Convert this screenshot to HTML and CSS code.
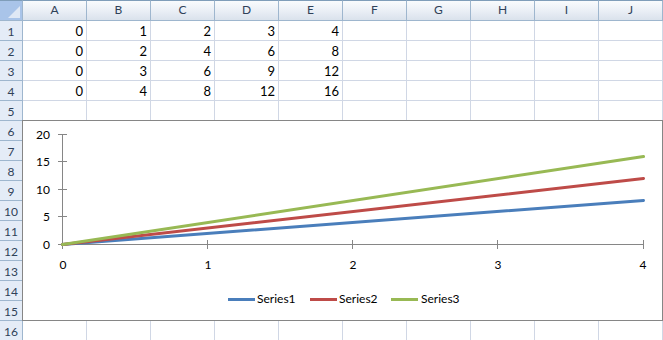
FILE: index.html
```html
<!DOCTYPE html>
<html lang="en">
<head>
  <meta charset="UTF-8" />
  <title>Book1 - Sheet1</title>
  <link rel="stylesheet" href="styles.css">
</head>
<body>
  <div class="sheet">
    <div class="corner"></div>
    <div class="colhead">A</div><div class="colhead">B</div><div class="colhead">C</div><div class="colhead">D</div><div class="colhead">E</div><div class="colhead">F</div><div class="colhead">G</div><div class="colhead">H</div><div class="colhead">I</div><div class="colhead">J</div>

    <div class="rowhead">1</div><div class="cell">0</div><div class="cell">1</div><div class="cell">2</div><div class="cell">3</div><div class="cell">4</div><div class="cell"></div><div class="cell"></div><div class="cell"></div><div class="cell"></div><div class="cell"></div>
    <div class="rowhead">2</div><div class="cell">0</div><div class="cell">2</div><div class="cell">4</div><div class="cell">6</div><div class="cell">8</div><div class="cell"></div><div class="cell"></div><div class="cell"></div><div class="cell"></div><div class="cell"></div>
    <div class="rowhead">3</div><div class="cell">0</div><div class="cell">3</div><div class="cell">6</div><div class="cell">9</div><div class="cell">12</div><div class="cell"></div><div class="cell"></div><div class="cell"></div><div class="cell"></div><div class="cell"></div>
    <div class="rowhead">4</div><div class="cell">0</div><div class="cell">4</div><div class="cell">8</div><div class="cell">12</div><div class="cell">16</div><div class="cell"></div><div class="cell"></div><div class="cell"></div><div class="cell"></div><div class="cell"></div>
    <div class="rowhead">5</div><div class="cell"></div><div class="cell"></div><div class="cell"></div><div class="cell"></div><div class="cell"></div><div class="cell"></div><div class="cell"></div><div class="cell"></div><div class="cell"></div><div class="cell"></div>
    <div class="rowhead">6</div><div class="cell"></div><div class="cell"></div><div class="cell"></div><div class="cell"></div><div class="cell"></div><div class="cell"></div><div class="cell"></div><div class="cell"></div><div class="cell"></div><div class="cell"></div>
    <div class="rowhead">7</div><div class="cell"></div><div class="cell"></div><div class="cell"></div><div class="cell"></div><div class="cell"></div><div class="cell"></div><div class="cell"></div><div class="cell"></div><div class="cell"></div><div class="cell"></div>
    <div class="rowhead">8</div><div class="cell"></div><div class="cell"></div><div class="cell"></div><div class="cell"></div><div class="cell"></div><div class="cell"></div><div class="cell"></div><div class="cell"></div><div class="cell"></div><div class="cell"></div>
    <div class="rowhead">9</div><div class="cell"></div><div class="cell"></div><div class="cell"></div><div class="cell"></div><div class="cell"></div><div class="cell"></div><div class="cell"></div><div class="cell"></div><div class="cell"></div><div class="cell"></div>
    <div class="rowhead">10</div><div class="cell"></div><div class="cell"></div><div class="cell"></div><div class="cell"></div><div class="cell"></div><div class="cell"></div><div class="cell"></div><div class="cell"></div><div class="cell"></div><div class="cell"></div>
    <div class="rowhead">11</div><div class="cell"></div><div class="cell"></div><div class="cell"></div><div class="cell"></div><div class="cell"></div><div class="cell"></div><div class="cell"></div><div class="cell"></div><div class="cell"></div><div class="cell"></div>
    <div class="rowhead">12</div><div class="cell"></div><div class="cell"></div><div class="cell"></div><div class="cell"></div><div class="cell"></div><div class="cell"></div><div class="cell"></div><div class="cell"></div><div class="cell"></div><div class="cell"></div>
    <div class="rowhead">13</div><div class="cell"></div><div class="cell"></div><div class="cell"></div><div class="cell"></div><div class="cell"></div><div class="cell"></div><div class="cell"></div><div class="cell"></div><div class="cell"></div><div class="cell"></div>
    <div class="rowhead">14</div><div class="cell"></div><div class="cell"></div><div class="cell"></div><div class="cell"></div><div class="cell"></div><div class="cell"></div><div class="cell"></div><div class="cell"></div><div class="cell"></div><div class="cell"></div>
    <div class="rowhead">15</div><div class="cell"></div><div class="cell"></div><div class="cell"></div><div class="cell"></div><div class="cell"></div><div class="cell"></div><div class="cell"></div><div class="cell"></div><div class="cell"></div><div class="cell"></div>
    <div class="rowhead">16</div><div class="cell"></div><div class="cell"></div><div class="cell"></div><div class="cell"></div><div class="cell"></div><div class="cell"></div><div class="cell"></div><div class="cell"></div><div class="cell"></div><div class="cell"></div>

    <!-- embedded chart floats over the cells -->
    <svg class="chart" width="641" height="201" viewBox="22 120 641 201">
      <rect x="22.5" y="120.5" width="640" height="200" fill="#fff" stroke="#868686"/>
      <g stroke="#868686" stroke-width="1">
        <line x1="62.5" y1="134" x2="62.5" y2="245"/>
        <line x1="62" y1="244.5" x2="644" y2="244.5"/>
        <line x1="58" y1="134.5" x2="67" y2="134.5"/>
        <line x1="58" y1="161.5" x2="67" y2="161.5"/>
        <line x1="58" y1="189.5" x2="67" y2="189.5"/>
        <line x1="58" y1="216.5" x2="67" y2="216.5"/>
        <line x1="58" y1="244.5" x2="67" y2="244.5"/>
        <line x1="62.5" y1="240" x2="62.5" y2="249"/>
        <line x1="207.5" y1="240" x2="207.5" y2="249"/>
        <line x1="352.5" y1="240" x2="352.5" y2="249"/>
        <line x1="497.5" y1="240" x2="497.5" y2="249"/>
        <line x1="643.5" y1="240" x2="643.5" y2="249"/>
      </g>
      <g class="axis-labels" text-anchor="end">
        <text x="50" y="139">20</text>
        <text x="50" y="166">15</text>
        <text x="50" y="194">10</text>
        <text x="50" y="221">5</text>
        <text x="50" y="249">0</text>
      </g>
      <g class="axis-labels" text-anchor="middle">
        <text x="63" y="269">0</text>
        <text x="208" y="269">1</text>
        <text x="353" y="269">2</text>
        <text x="498" y="269">3</text>
        <text x="643" y="269">4</text>
      </g>
      <g fill="none" stroke-width="3" stroke-linecap="round">
        <line x1="62.5" y1="244.5" x2="643.5" y2="200.5" stroke="#4a7ebb"/>
        <line x1="62.5" y1="244.5" x2="643.5" y2="178.5" stroke="#be4b48"/>
        <line x1="62.5" y1="244.5" x2="643.5" y2="156.5" stroke="#98b954"/>
      </g>
      <g class="legend" stroke-width="3">
        <line x1="228" y1="299.5" x2="255" y2="299.5" stroke="#4a7ebb"/>
        <text x="257" y="303">Series1</text>
        <line x1="310" y1="299.5" x2="337" y2="299.5" stroke="#be4b48"/>
        <text x="339" y="303">Series2</text>
        <line x1="391" y1="299.5" x2="418" y2="299.5" stroke="#98b954"/>
        <text x="421" y="303">Series3</text>
      </g>
    </svg>
  </div>
</body>
</html>
```
FILE: styles.css
```css
*{margin:0;padding:0;box-sizing:border-box}
html,body{width:663px;height:340px;overflow:hidden;background:#fff;font-family:Lato,'Liberation Sans',sans-serif}
.sheet{position:relative;display:grid;grid-template-columns:23px repeat(10,64px);grid-template-rows:21px;grid-auto-rows:20px}
.corner{background:#a9c4e9;border-top:1px solid #7f9db9;border-right:1px solid #9eb6ce;border-bottom:1px solid #9eb6ce;position:relative}
.corner::after{content:'';position:absolute;right:2px;bottom:2px;border-style:solid;border-width:0 0 12px 12px;border-color:transparent transparent #dfe8f5 transparent}
.colhead{background:linear-gradient(#f9fbfd,#e9eef5 55%,#dae2ec);border-top:1px solid #7f9db9;border-right:1px solid #9eb6ce;border-bottom:1px solid #9eb6ce;color:#2f4158;font-size:12px;line-height:18px;text-align:center}
.rowhead{background:#e4ecf7;border-right:1px solid #9eb6ce;border-bottom:1px solid #9eb6ce;color:#2f4158;font-size:12px;line-height:19px;text-align:center;padding-top:1px}
.cell{border-right:1px solid #d0d7e5;border-bottom:1px solid #d0d7e5;font-size:13px;line-height:19px;padding:1px 3px 0 0;text-align:right;color:#000}
.chart{position:absolute;left:22px;top:120px}
.axis-labels{font-family:Lato,'Liberation Sans',sans-serif;font-size:12px;fill:#000}
.legend{font-family:Lato,'Liberation Sans',sans-serif;font-size:12px;fill:#000}
```
